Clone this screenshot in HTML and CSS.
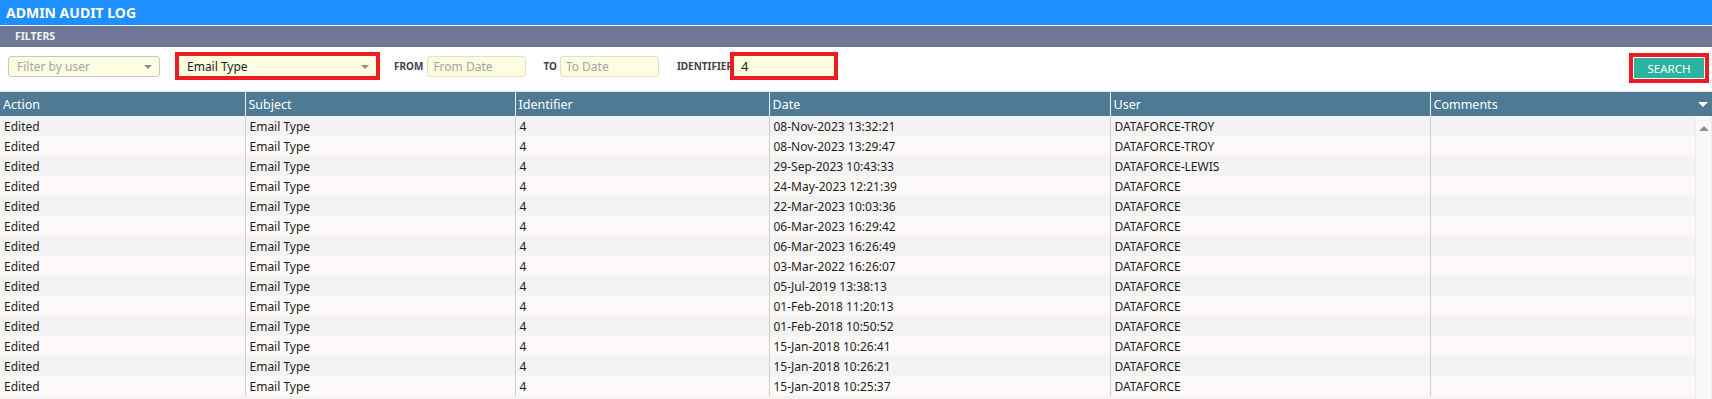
FILE: index.html
```html
<!DOCTYPE html>
<html lang="en">
<head>
  <meta charset="UTF-8">
  <meta name="viewport" content="width=device-width, initial-scale=1.0">
  <title>Admin Audit Log</title>
  <link rel="stylesheet" href="styles.css">
</head>
<body>
  <div class="page-title">ADMIN AUDIT LOG</div>
  <div class="section-bar">FILTERS</div>

  <!-- Filter row -->
  <div class="filter-row">
    <div class="select user-select">
      <span class="placeholder">Filter by user</span>
      <span class="caret"></span>
    </div>
    <div class="highlight type-box">
      <div class="select inner-select">
        <span>Email Type</span>
        <span class="caret"></span>
      </div>
    </div>
    <label class="filter-label from-label">FROM</label>
    <div class="date-input"><span class="placeholder">From Date</span></div>
    <label class="filter-label to-label">TO</label>
    <div class="date-input"><span class="placeholder">To Date</span></div>
    <label class="filter-label id-label">IDENTIFIER</label>
    <div class="highlight id-box">
      <div class="id-input">4</div>
    </div>
    <div class="highlight search-box">
      <button class="search-button">SEARCH</button>
    </div>
  </div>

  <!-- Grid -->
  <div class="grid">
    <div class="grid-header">
      <table class="grid-table">
        <colgroup>
          <col style="width:245px"><col style="width:270px"><col style="width:254px">
          <col style="width:341px"><col style="width:320px"><col style="width:265px">
        </colgroup>
        <tr>
          <th>Action</th><th>Subject</th><th>Identifier</th><th>Date</th><th>User</th><th>Comments</th>
        </tr>
      </table>
      <div class="header-menu"><span class="caret-white"></span></div>
    </div>
    <div class="grid-body">
      <div class="body-scroll">
        <table class="grid-table">
          <colgroup>
            <col style="width:245px"><col style="width:270px"><col style="width:254px">
            <col style="width:341px"><col style="width:320px"><col style="width:265px">
          </colgroup>
          <tbody id="rows"></tbody>
        </table>
      </div>
      <div class="scrollbar"><span class="caret-up"></span></div>
    </div>
  </div>

  <script>
    const dates = [
      ['08-Nov-2023 13:32:21', 'DATAFORCE-TROY'],
      ['08-Nov-2023 13:29:47', 'DATAFORCE-TROY'],
      ['29-Sep-2023 10:43:33', 'DATAFORCE-LEWIS'],
      ['24-May-2023 12:21:39', 'DATAFORCE'],
      ['22-Mar-2023 10:03:36', 'DATAFORCE'],
      ['06-Mar-2023 16:29:42', 'DATAFORCE'],
      ['06-Mar-2023 16:26:49', 'DATAFORCE'],
      ['03-Mar-2022 16:26:07', 'DATAFORCE'],
      ['05-Jul-2019 13:38:13', 'DATAFORCE'],
      ['01-Feb-2018 11:20:13', 'DATAFORCE'],
      ['01-Feb-2018 10:50:52', 'DATAFORCE'],
      ['15-Jan-2018 10:26:41', 'DATAFORCE'],
      ['15-Jan-2018 10:26:21', 'DATAFORCE'],
      ['15-Jan-2018 10:25:37', 'DATAFORCE']
    ];

    // Build the audit rows
    const tbody = document.getElementById('rows');
    dates.forEach(([date, user]) => {
      const tr = document.createElement('tr');
      tr.innerHTML = `
        <td>Edited</td><td>Email Type</td><td>4</td>
        <td>${date}</td><td>${user}</td><td></td>
      `;
      tbody.appendChild(tr);
    });
  </script>
</body>
</html>
```

FILE: styles.css
```css
body {
  margin: 0;
  font-family: "Noto Sans", "Open Sans", sans-serif;
  font-size: 12px;
  color: #1e1e1e;
  background: #ffffff;
  overflow: hidden;
}

/* Title bars */
.page-title {
  height: 25px;
  line-height: 25px;
  padding-left: 6px;
  background-color: #1e8fff;
  color: #ffffff;
  font-weight: bold;
  font-size: 14px;
  border-bottom: 1px solid #ffffff;
}

.section-bar {
  height: 21px;
  line-height: 21px;
  padding-left: 15px;
  background-color: #6e7896;
  color: #f4f4f4;
  font-weight: bold;
  font-size: 10.5px;
}

/* Filters */
.filter-row {
  display: flex;
  align-items: center;
  height: 28px;
  padding: 5px 3px 11px 8px;
}

.select {
  display: flex;
  align-items: center;
  justify-content: space-between;
  box-sizing: border-box;
  background-color: #fdfde1;
}

.user-select {
  width: 152px;
  height: 21px;
  border: 1px solid #c6c6c6;
  border-radius: 3px;
  padding: 0 7px 0 8px;
}

.placeholder {
  color: #a5a5a5;
}

.caret {
  width: 0;
  height: 0;
  border-left: 4px solid transparent;
  border-right: 4px solid transparent;
  border-top: 4px solid #8c8c8c;
  margin-top: 2px;
}

.highlight {
  box-sizing: border-box;
  border: 4px solid #ed1c24;
  background-color: #ffffff;
}

.type-box {
  width: 205px;
  height: 28px;
  margin-left: 15px;
}

.inner-select {
  height: 20px;
  padding: 0 7px 0 8px;
}

.filter-label {
  font-size: 10px;
  font-weight: bold;
  color: #444444;
}

.from-label {
  margin-left: 14px;
  margin-right: 4px;
}

.to-label {
  margin-left: 17px;
  margin-right: 3px;
}

.id-label {
  margin-left: 18px;
}

.date-input {
  box-sizing: border-box;
  width: 99px;
  height: 21px;
  line-height: 19px;
  padding-left: 5px;
  border: 1px solid #e3e0c6;
  border-radius: 3px;
  background-color: #fdfde1;
}

.id-box {
  width: 108px;
  height: 28px;
  margin-left: -3px;
}

.id-input {
  height: 20px;
  line-height: 20px;
  padding-left: 7px;
  background-color: #fdfde1;
  font-size: 13px;
}

.search-box {
  margin-left: auto;
  margin-top: 4px;
  width: 80px;
  height: 30px;
  padding: 1px;
}

.search-button {
  display: block;
  width: 70px;
  height: 20px;
  border: none;
  padding: 0;
  background-color: #2bb39f;
  color: #ffffff;
  font-family: inherit;
  font-size: 11.5px;
}

/* Grid */
.grid-header {
  display: flex;
  height: 25px;
  background-color: #4e7a95;
  border-top: 1px solid #dfe6ea;
  box-sizing: border-box;
}

.grid-table {
  width: 1695px;
  border-collapse: collapse;
  table-layout: fixed;
}

.grid-table th {
  height: 24px;
  padding: 0 3px;
  text-align: left;
  font-weight: normal;
  font-size: 12.5px;
  color: #ffffff;
  border-left: 1px solid #e9eef1;
}

.grid-table th:first-child {
  border-left: none;
}

.header-menu {
  display: flex;
  align-items: center;
  justify-content: center;
  width: 15px;
}

.caret-white {
  width: 0;
  height: 0;
  border-left: 5px solid transparent;
  border-right: 5px solid transparent;
  border-top: 5px solid #ffffff;
}

.grid-body {
  display: flex;
  height: 283px;
  background-color: #f3f3f3;
}

.body-scroll {
  width: 1695px;
}

.grid-table td {
  height: 20px;
  padding: 0 4px;
  white-space: nowrap;
  border-left: 1px solid #cfcfcf;
}

.grid-table td:first-child {
  border-left: none;
}

.grid-table tr:nth-child(odd) td {
  background-color: #f3f3f3;
}

.grid-table tr:nth-child(even) td {
  background-color: #fdf9f8;
}

.scrollbar {
  display: flex;
  justify-content: center;
  width: 15px;
  padding-top: 10px;
  background-color: #f8f8f8;
  border-left: 1px solid #ececec;
  border-right: 1px solid #ececec;
}

.caret-up {
  width: 0;
  height: 0;
  border-left: 5px solid transparent;
  border-right: 5px solid transparent;
  border-bottom: 5px solid #8e8e8e;
}
```
